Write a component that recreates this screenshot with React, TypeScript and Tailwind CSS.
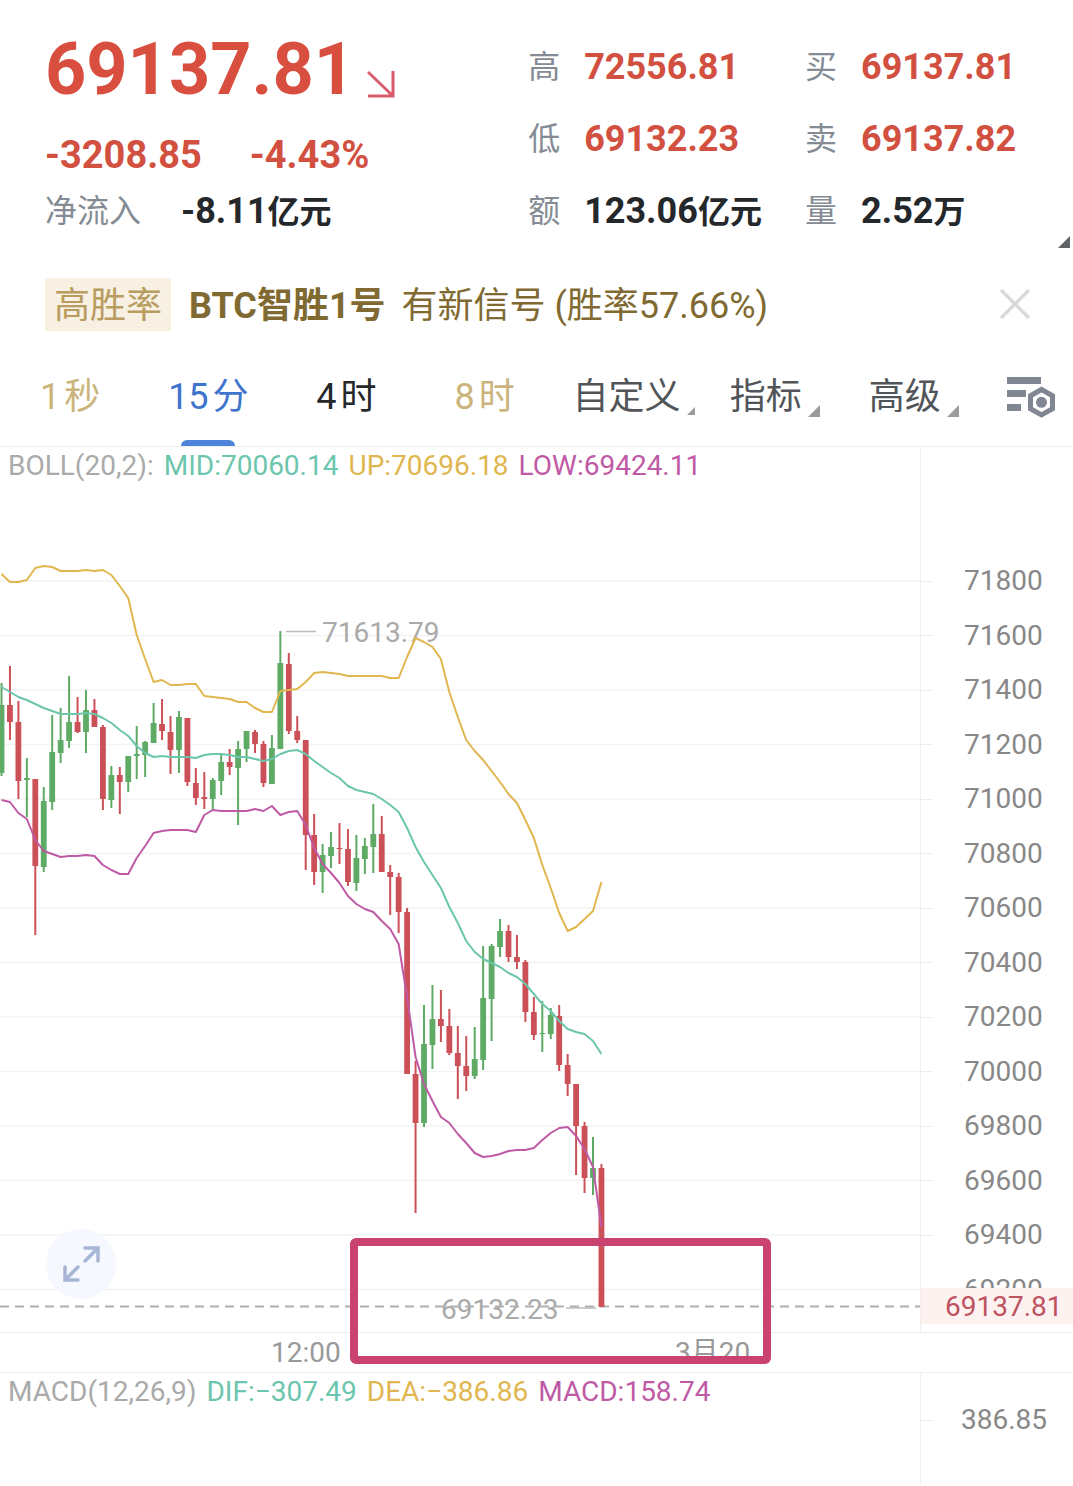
import React, { useState } from 'react';

type Side = 'up' | 'down';
// side, high, body top, body bottom, low (canvas units)
type Candle = [Side, number, number, number, number];

const CANDLES: Candle[] = [
  ['up', 683, 705, 773, 776],
  ['down', 666, 705, 722, 740],
  ['down', 701, 722, 781, 799],
  ['up', 758, 778, 780, 817],
  ['down', 779, 779, 866, 935],
  ['up', 787, 801, 867, 872],
  ['up', 715, 752, 802, 810],
  ['up', 708, 740, 753, 763],
  ['up', 676, 722, 741, 748],
  ['down', 697, 722, 732, 733],
  ['up', 690, 710, 732, 753],
  ['down', 699, 710, 727, 727],
  ['down', 725, 727, 799, 810],
  ['up', 766, 775, 800, 808],
  ['down', 767, 775, 782, 814],
  ['up', 756, 756, 782, 792],
  ['up', 726, 754, 756, 779],
  ['up', 741, 742, 755, 777],
  ['up', 703, 723, 743, 743],
  ['down', 699, 724, 731, 740],
  ['down', 716, 732, 750, 774],
  ['up', 711, 717, 750, 773],
  ['down', 718, 718, 782, 786],
  ['down', 768, 783, 798, 805],
  ['down', 772, 797, 799, 809],
  ['up', 778, 780, 799, 811],
  ['up', 755, 762, 781, 795],
  ['down', 749, 762, 767, 775],
  ['up', 741, 749, 768, 825],
  ['up', 731, 731, 749, 762],
  ['down', 730, 732, 744, 753],
  ['down', 741, 744, 783, 787],
  ['up', 735, 748, 784, 784],
  ['up', 631, 663, 749, 749],
  ['down', 653, 664, 731, 734],
  ['down', 716, 731, 740, 743],
  ['down', 740, 740, 835, 870],
  ['down', 814, 835, 872, 885],
  ['up', 844, 855, 872, 893],
  ['up', 832, 847, 856, 868],
  ['down', 823, 848, 849, 864],
  ['down', 829, 849, 882, 886],
  ['up', 835, 858, 883, 891],
  ['up', 838, 846, 859, 874],
  ['up', 804, 834, 847, 873],
  ['down', 816, 834, 872, 872],
  ['down', 865, 872, 877, 915],
  ['down', 873, 877, 912, 933],
  ['down', 908, 912, 1074, 1074],
  ['down', 1061, 1074, 1123, 1213],
  ['up', 1005, 1044, 1123, 1127],
  ['up', 985, 1019, 1045, 1069],
  ['down', 990, 1019, 1026, 1042],
  ['down', 1009, 1026, 1053, 1055],
  ['down', 1026, 1053, 1066, 1099],
  ['down', 1036, 1066, 1076, 1091],
  ['up', 1027, 1059, 1076, 1079],
  ['up', 946, 998, 1060, 1070],
  ['up', 944, 946, 999, 1041],
  ['up', 919, 931, 947, 957],
  ['down', 925, 931, 957, 962],
  ['down', 935, 957, 962, 969],
  ['down', 960, 962, 1012, 1022],
  ['down', 997, 1012, 1035, 1040],
  ['up', 1001, 1033, 1034, 1052],
  ['up', 1008, 1015, 1034, 1039],
  ['down', 1005, 1016, 1065, 1071],
  ['down', 1054, 1065, 1084, 1096],
  ['down', 1084, 1084, 1126, 1175],
  ['down', 1122, 1126, 1178, 1193],
  ['up', 1137, 1168, 1178, 1195],
  ['down', 1164, 1168, 1307, 1307],
];

const BOLL_UP = [
  574, 582, 582, 580, 568, 566, 567, 571, 571, 571, 570, 571, 570, 575, 586, 598, 635, 659,
  682, 680, 685, 685, 684, 684, 696, 697, 698, 699, 702, 702, 708, 712, 712, 691, 690, 689,
  682, 673, 672, 673, 674, 676, 676, 676, 676, 676, 678, 678, 657, 638, 642, 647, 659, 692,
  717, 740, 751, 760, 771, 782, 794, 803, 820, 838, 865, 888, 913, 931, 927, 919, 911, 882,
];

const BOLL_MID = [
  687, 692, 697, 700, 704, 708, 711, 714, 714, 714, 713, 714, 718, 723, 730, 736, 746, 753,
  757, 756, 757, 757, 757, 758, 755, 754, 754, 755, 757, 757, 759, 761, 759, 754, 751, 750,
  754, 761, 767, 773, 778, 786, 790, 792, 794, 799, 805, 812, 828, 847, 862, 875, 888, 907,
  923, 941, 952, 959, 963, 967, 973, 977, 984, 994, 1004, 1011, 1021, 1029, 1032, 1034, 1041, 1054,
];

const BOLL_LOW = [
  800, 802, 813, 819, 840, 851, 854, 857, 856, 856, 855, 856, 865, 870, 874, 874, 858, 846,
  833, 831, 830, 830, 830, 832, 815, 810, 811, 811, 811, 811, 809, 811, 806, 815, 812, 811,
  825, 848, 864, 873, 883, 896, 904, 909, 912, 921, 929, 944, 997, 1057, 1084, 1101, 1117, 1123,
  1134, 1143, 1153, 1157, 1156, 1154, 1151, 1150, 1150, 1148, 1140, 1133, 1128, 1127, 1136, 1149, 1167, 1227,
];

const PRICES = [
  71800, 71600, 71400, 71200, 71000, 70800, 70600, 70400, 70200, 70000, 69800, 69600, 69400, 69200,
];

const QUOTES = [
  { label: '高', value: '72556.81', color: 'text-[#d2503f]' },
  { label: '买', value: '69137.81', color: 'text-[#d2503f]' },
  { label: '低', value: '69132.23', color: 'text-[#d2503f]' },
  { label: '卖', value: '69137.82', color: 'text-[#d2503f]' },
  { label: '额', value: '123.06', unit: '亿元', color: 'text-[#25282b]' },
  { label: '量', value: '2.52', unit: '万', color: 'text-[#25282b]' },
];

const PERIODS = [
  { count: '1', unit: '秒', color: 'text-[#cbb47c]' },
  { count: '15', unit: '分', color: 'text-[#25282b]' },
  { count: '4', unit: '时', color: 'text-[#25282b]' },
  { count: '8', unit: '时', color: 'text-[#cbb47c]' },
];

const candleX = (i: number) => 1.5 + i * 8.45;
const priceY = (price: number) => 581 + (71800 - price) * 0.2725;
const toPoints = (ys: number[]) => ys.map((y, i) => `${candleX(i)},${y}`).join(' ');

const Corner: React.FC<{ className: string }> = ({ className }) => (
  <svg viewBox="0 0 12 12" className={className} aria-hidden="true">
    <path d="M12 0V12H0Z" fill="currentColor" />
  </svg>
);

const Header: React.FC = () => (
  <header className="relative flex h-[260px] pl-[45px]">
    <div className="w-[47%] pt-[26px]">
      <div className="flex h-[88px] items-center font-bold text-[#d94f3f]">
        <span className="text-[72px] leading-[88px]">69137.81</span>
        <svg viewBox="0 0 28 28" className="mt-7 ml-3 size-7" fill="none" stroke="#d95c6c" strokeWidth="3" aria-hidden="true">
          <path d="M1 2L26 26M1 26H26V1" />
        </svg>
      </div>
      <div className="mt-[13px] flex h-14 items-center gap-12 text-[38px] font-bold text-[#d2503f]">
        <span>-3208.85</span>
        <span>-4.43%</span>
      </div>
      <div className="flex h-14 items-center gap-10 text-[36px] leading-[56px]">
        <span className="text-[32px] text-[#858b94]">净流入</span>
        <span className="font-bold text-[#25282b]">
          -8.11<span className="text-[32px]">亿元</span>
        </span>
      </div>
    </div>
    <dl className="grid flex-1 grid-cols-[277fr_268fr] content-start pt-[31px]">
      {QUOTES.map((q) => (
        <div key={q.label} className="flex h-[72px] items-center leading-[56px]">
          <dt className="w-14 text-[32px] text-[#858b94]">{q.label}</dt>
          <dd className={`text-[36px] font-bold ${q.color}`}>
            {q.value}
            {q.unit && <span className="text-[32px]">{q.unit}</span>}
          </dd>
        </div>
      ))}
    </dl>
    <Corner className="absolute right-[3px] bottom-3 size-3 text-[#5f6267]" />
  </header>
);

const SignalBanner: React.FC = () => (
  <div className="flex h-[88px] items-center pr-[42px] pl-[45px] text-[36px] leading-[49px] text-[#806a32]">
    <span className="bg-[#f7f0e3] px-[9px] pt-1 text-[#b99c5f]">高胜率</span>
    <p className="ml-[18px] flex-1 pt-1 whitespace-nowrap">
      <b className="mr-4 font-bold">BTC智胜1号</b>
      有新信号 (胜率57.66%)
    </p>
    <button type="button" aria-label="关闭" className="text-[#d9dadb]">
      <svg viewBox="0 0 32 32" className="size-8" fill="none" stroke="currentColor" strokeWidth="3.5">
        <path d="M2 2L30 30M30 2L2 30" />
      </svg>
    </button>
  </div>
);

const PeriodTabs: React.FC = () => {
  const [active, setActive] = useState(1);

  return (
    <nav className="grid h-[99px] grid-cols-[128fr_148fr_138fr_118fr_157fr_139fr_138fr_48fr] border-b border-[#efefef] pr-[18px] pl-10 text-[36px] leading-[56px] whitespace-nowrap">
      {PERIODS.map((period, i) => (
        <button
          key={period.count}
          type="button"
          onClick={() => setActive(i)}
          className={`relative flex items-center gap-1 justify-self-start ${active === i ? 'text-[#3f74cc]' : period.color}`}
        >
          <span>{period.count}</span>
          <span>{period.unit}</span>
          {active === i && (
            <span className="absolute bottom-0 left-1/2 h-1.5 w-[54px] -translate-x-1/2 rounded-t-md bg-[#4e83db]" />
          )}
        </button>
      ))}
      <button type="button" className="flex items-center text-[#515559]">
        自定义
        <Corner className="mt-7 ml-1.5 size-2 text-[#9b9b9b]" />
      </button>
      <button type="button" className="flex items-center text-[#515559]">
        指标
        <Corner className="mt-7 ml-1.5 size-3 text-[#9b9b9b]" />
      </button>
      <button type="button" className="flex items-center text-[#515559]">
        高级
        <Corner className="mt-7 ml-1.5 size-3 text-[#9b9b9b]" />
      </button>
      <button type="button" aria-label="设置" className="flex items-center text-[#808692]">
        <svg viewBox="0 0 48 44" className="h-11 w-12" fill="currentColor">
          <path d="M0 2H34V9H0ZM0 15H19V22H0ZM0 29H14V36H0Z" />
          <path d="M34.500 14.500L45.500 20.800V33.800L34.500 40L23.500 33.800V20.800Z" fill="none" stroke="currentColor" strokeWidth="5" />
          <circle cx="34.500" cy="27.300" r="5.500" />
        </svg>
      </button>
    </nav>
  );
};

const PricePlot: React.FC = () => (
  <svg viewBox="0 487 920 845" className="block w-full" role="img" aria-label="BTC 15分 K线">
    {PRICES.map((p) => (
      <line key={p} x1="0" x2="920" y1={priceY(p)} y2={priceY(p)} stroke="#f3f3f3" strokeWidth="1.5" />
    ))}
    <g fill="#aaaaaa" fontSize="28">
      <text x="322" y="642">71613.79</text>
      <text x="441" y="1319">69132.23</text>
    </g>
    <path d="M286 631.500H316M566 1308H596" stroke="#bdbdbd" strokeWidth="1.500" />
    <line x1="0" x2="920" y1="1306.500" y2="1306.500" stroke="#b0b0b0" strokeWidth="2" strokeDasharray="9 6" />
    {CANDLES.map(([side, high, top, bottom, low], i) => (
      <g key={i} fill={side === 'up' ? '#5fab66' : '#cb5057'}>
        <rect x={candleX(i) - 1} y={high} width="2" height={low - high} />
        <rect x={candleX(i) - 2.9} y={top} width="5.8" height={bottom - top} />
      </g>
    ))}
    <g fill="none" strokeWidth="2" strokeLinejoin="round">
      <polyline points={toPoints(BOLL_UP)} stroke="#e0b64f" />
      <polyline points={toPoints(BOLL_MID)} stroke="#6cc5ad" />
      <polyline points={toPoints(BOLL_LOW)} stroke="#bf5aa6" />
    </g>
  </svg>
);

const PriceAxis: React.FC = () => (
  <div className="relative w-[153px] border-l border-[#efefef] pt-[118px]">
    <ul className="flex h-[741px] flex-col justify-between text-[28px] leading-8 text-[#888888]">
      {PRICES.map((p) => (
        <li key={p} className="flex items-center">
          <span className="h-px w-3 bg-[#ededed]" />
          <span className="ml-[31px]">{p}</span>
        </li>
      ))}
    </ul>
    <div className="absolute inset-x-0 top-[841px] bg-[#fdf2f0] pt-0.5 pl-6 text-[28px] leading-[34px] text-[#be5260]">
      69137.81
    </div>
  </div>
);

export default function App() {
  return (
    <main className="min-h-screen overflow-x-hidden bg-white font-[Roboto,'Noto_Sans_CJK_SC',sans-serif]">
      <Header />
      <SignalBanner />
      <PeriodTabs />

      {/* Candles + time axis */}
      <section className="relative">
        <div className="flex">
          <div className="min-w-0 flex-1">
            <div className="flex h-10 gap-2.5 pl-2 text-[28px] leading-[38px] whitespace-nowrap text-[#aaaaaa]">
              <span>BOLL(20,2):</span>
              <span className="text-[#6cc5ad]">MID:70060.14</span>
              <span className="text-[#e0b64f]">UP:70696.18</span>
              <span className="text-[#bf5aa6]">LOW:69424.11</span>
            </div>
            <PricePlot />
          </div>
          <PriceAxis />
        </div>
        <div className="grid h-10 grid-cols-[271fr_404fr_398fr] overflow-hidden border-t border-[#efefef] text-[28px] leading-10 text-[#999999]">
          <span className="col-start-2">12:00</span>
          <span className="h-7 overflow-hidden">3月20</span>
        </div>

        <button
          type="button"
          aria-label="全屏"
          className="absolute bottom-[73px] left-[46px] flex size-[70px] items-center justify-center rounded-full bg-[#f5f8fe]"
        >
          <svg viewBox="0 0 38 38" className="size-[38px]" fill="none" stroke="#a5b5d3" strokeWidth="3.500" strokeLinecap="round">
            <path d="M23 3H36V16M35 4L23 16" />
            <path d="M3 22V35H16M4 34L16 22" />
          </svg>
        </button>

        {/* Highlight frame around the session low */}
        <div className="pointer-events-none absolute bottom-2 left-[350px] h-[126px] w-[421px] rounded-md border-8 border-[#c94270]" />
      </section>

      {/* MACD */}
      <section className="flex h-28 border-t border-[#efefef] text-[28px] leading-[38px]">
        <div className="flex min-w-0 flex-1 gap-2.5 pl-2 whitespace-nowrap text-[#aaaaaa]">
          <span>MACD(12,26,9)</span>
          <span className="text-[#6cc5ad]">DIF:−307.49</span>
          <span className="text-[#e0b64f]">DEA:−386.86</span>
          <span className="text-[#bf5aa6]">MACD:158.74</span>
        </div>
        <div className="flex w-[153px] items-start border-l border-[#efefef] pt-7 text-[#888888]">
          <div className="flex items-center">
            <span className="h-px w-3 bg-[#ededed]" />
            <span className="ml-7">386.85</span>
          </div>
        </div>
      </section>
    </main>
  );
}
